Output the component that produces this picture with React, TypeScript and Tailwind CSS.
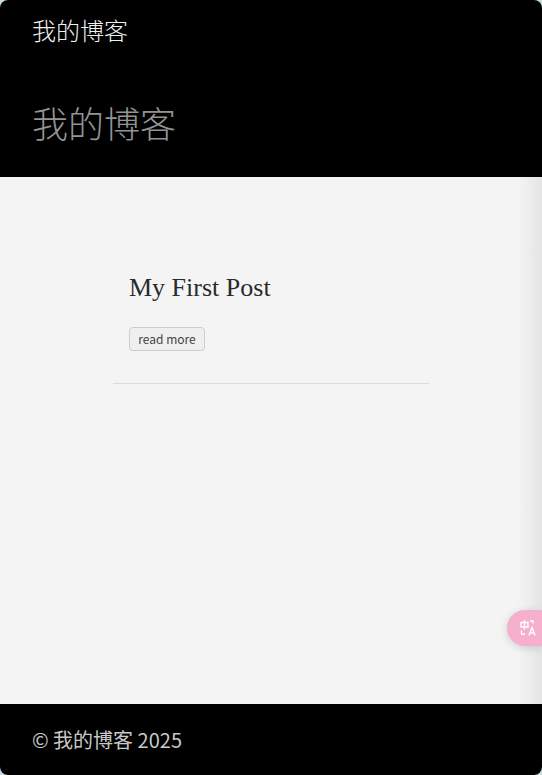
export default function App() {
  const sans = "font-['Noto_Sans_CJK_SC','Noto_Sans',sans-serif]";
  return (
    <div className="h-[775px] w-[542px] overflow-hidden bg-[#c4dde2]">
      <div className={`relative flex h-full flex-col overflow-hidden rounded-lg bg-[#f4f4f4] ${sans}`}>
        <header className="flex h-[177px] flex-col bg-black px-8">
          <div className="pt-[13px] text-[24px] leading-[34px] font-extralight text-[#f0f0f0]">我的博客</div>
          <h1 className="mt-[49px] text-[36px] leading-[52px] font-extralight text-[#949494]">我的博客</h1>
        </header>
        <main className="relative flex flex-1 justify-center">
          <div className="w-[316px] pt-[93px]">
            <div className="border-b border-[#dcdcdc] px-4 pb-8">
              <h2 className="font-['Liberation_Serif',serif] text-[26px] leading-9 font-normal text-[#2a2a2a]">My First Post</h2>
              <button className="mt-[21px] flex h-6 w-[76px] items-center justify-center rounded border border-[#cccccc] bg-[#efefef] text-[12px] text-[#444444]">
                read more
              </button>
            </div>
          </div>
          <div className="pointer-events-none absolute inset-y-0 right-0 w-6 bg-gradient-to-r from-transparent to-[#e4e4e4]" />
          <div className="absolute top-[433px] right-0 flex h-9 w-[35px] items-center justify-center rounded-l-[18px] bg-[#f6b0cd] pl-[8px] shadow-[0_2px_8px_rgba(0,0,0,0.14)]">
            <svg width="20" height="20" viewBox="0 0 20 20" fill="none" stroke="white" strokeWidth="1.4">
              <path d="M2 4.5h7v4.5H2zM5.5 2v9.5" />
              <path d="M11 3h3v2.5M2.5 12.5v3.5h3.5" />
              <path d="M10 17.5l3-8 3 8M11 15h4" />
            </svg>
          </div>
        </main>
        <footer className="flex h-[71px] items-center bg-black px-8 text-[20px] text-[#c8c8c8]">© 我的博客 2025</footer>
      </div>
    </div>
  );
}
